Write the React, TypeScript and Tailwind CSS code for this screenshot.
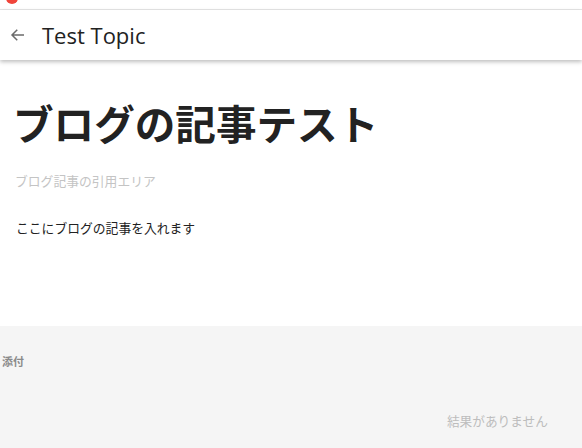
import React from "react";

export default function App() {
  return (
    <div className="w-[582px] h-[448px] bg-white relative overflow-hidden flex flex-col" style={{ fontFamily: '"Open Sans", "Noto Sans CJK JP", sans-serif' }}>
      <div className="absolute left-[6px] top-[-8px] w-[12px] h-[12px] rounded-full bg-[#f0443a]" />
      <div className="h-[9px] shrink-0 border-b border-[#e6e6e6] box-content" />
      <div className="h-[50px] shrink-0 flex items-center shadow-[0_2px_4px_rgba(0,0,0,0.25)] relative z-10 bg-white">
        <svg width="18" height="18" viewBox="0 0 24 24" className="ml-[9px] text-[#6b6b6b]" fill="none" stroke="currentColor" strokeWidth="2">
          <path d="M20 12H5M11 5l-7 7 7 7" />
        </svg>
        <span className="ml-[15px] text-[22px] text-[#222]">Test Topic</span>
      </div>
      <div className="flex-1 flex flex-col pl-[15px]" style={{ fontFamily: '"Noto Sans CJK JP", sans-serif' }}>
        <h1 className="mt-[37px] -ml-[2px] text-[40.6px] leading-[52px] font-bold text-[#222]">ブログの記事テスト</h1>
        <p className="mt-[23px] text-[12.8px] leading-[18px] text-[#c4c4c4]">ブログ記事の引用エリア</p>
        <p className="mt-[29px] text-[12.8px] leading-[18px] text-[#222] pl-[1px]">ここにブログの記事を入れます</p>
      </div>
      <div className="h-[122px] shrink-0 bg-[#f5f5f5] flex flex-col" style={{ fontFamily: '"Noto Sans CJK JP", sans-serif' }}>
        <div className="mt-[28px] ml-[2px] text-[11px] font-bold text-[#8a8a8a] leading-[14px]">添付</div>
        <div className="mt-[44px] self-end mr-[34px] text-[12.7px] text-[#bdbdbd] leading-[18px]">結果がありません</div>
      </div>
    </div>
  );
}
